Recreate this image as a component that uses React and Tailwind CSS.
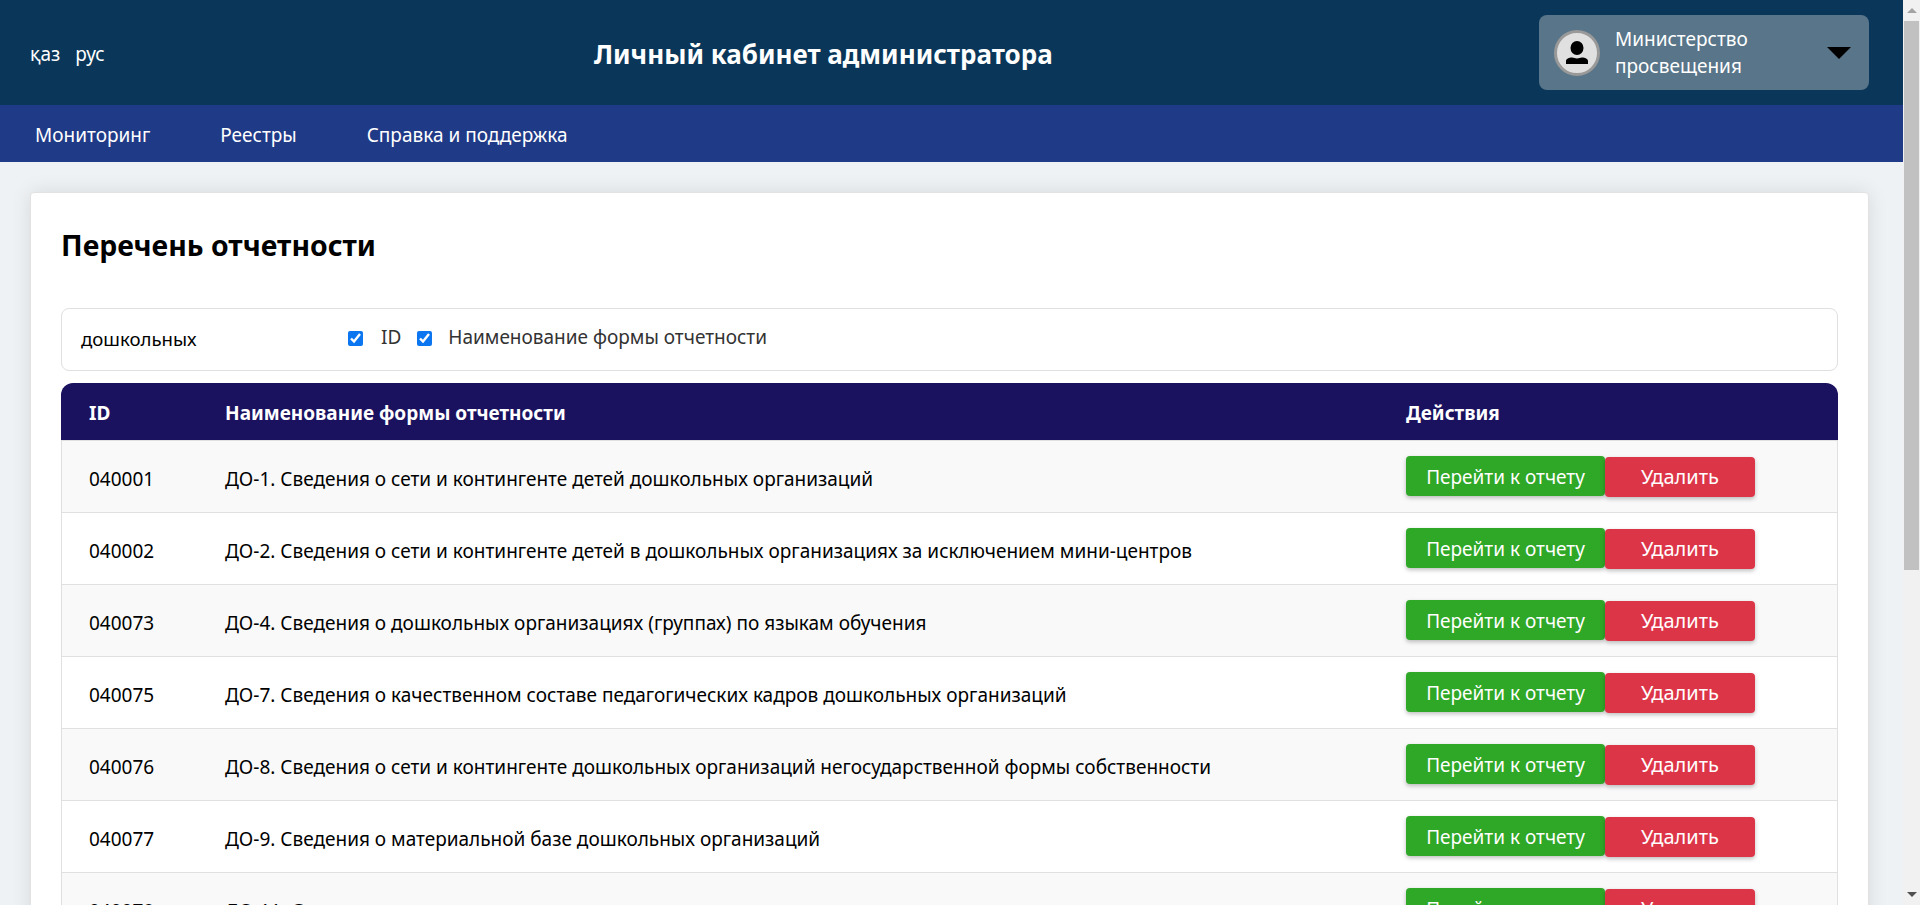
const rows = [
  ['040001', 'ДО-1. Сведения о сети и контингенте детей дошкольных организаций'],
  ['040002', 'ДО-2. Сведения о сети и контингенте детей в дошкольных организациях за исключением мини-центров'],
  ['040073', 'ДО-4. Сведения о дошкольных организациях (группах) по языкам обучения'],
  ['040075', 'ДО-7. Сведения о качественном составе педагогических кадров дошкольных организаций'],
  ['040076', 'ДО-8. Сведения о сети и контингенте дошкольных организаций негосударственной формы собственности'],
  ['040077', 'ДО-9. Сведения о материальной базе дошкольных организаций'],
  ['040078', 'ДО-11. Сведения'],
]

function UserIcon() {
  return (
    <div className="flex h-[46px] w-[46px] shrink-0 items-center justify-center rounded-full border-[3px] border-[#999] bg-[#e0e0e0]">
      <svg width="24" height="24" viewBox="0 0 24 24" fill="#000">
        <ellipse cx="12" cy="7" rx="6.500" ry="7" />
        <path d="M1 23v-3c0-2 3-3.500 6-3.500 2 0 3 1 5 1s3-1 5-1c3 0 6 1.500 6 3.500v3z" />
      </svg>
    </div>
  )
}

function Scrollbar() {
  return (
    <div className="flex h-full w-[17px] shrink-0 flex-col items-center bg-[#f1f1f1]">
      <div className="flex h-[21px] w-full items-center justify-center">
        <div className="h-0 w-0 border-x-[5px] border-b-[5px] border-x-transparent border-b-[#a3a3a3]" />
      </div>
      <div className="h-[549px] w-[15px] bg-[#c1c1c1]" />
      <div className="flex-1" />
      <div className="flex h-[21px] w-full items-center justify-center">
        <div className="h-0 w-0 border-x-[5px] border-t-[5px] border-x-transparent border-t-[#505050]" />
      </div>
    </div>
  )
}

export default function App() {
  return (
    <div className="flex h-screen overflow-hidden font-['Noto_Sans',sans-serif]">
      <div className="min-w-0 flex-1 overflow-hidden bg-[#eff2f5]">
        {/* Header */}
        <header className="flex h-[105px] items-center bg-[#0a3759] pl-[30px] pr-[34px] text-white">
          <div className="flex w-[564px] gap-[15px] pt-1 text-[19px]">
            <span>қаз</span>
            <span>рус</span>
          </div>
          <h1 className="flex-1 pt-[3px] text-[26px] font-bold">Личный кабинет администратора</h1>
          <div className="flex h-[75px] w-[330px] items-center rounded-lg bg-[#587589] pl-[15px] pr-[18px]">
            <UserIcon />
            <div className="ml-[15px] flex-1 text-[19px] leading-[27px]">Министерство просвещения</div>
            <div className="h-0 w-0 border-x-[12px] border-t-[12px] border-x-transparent border-t-black" />
          </div>
        </header>

        <nav className="flex h-[57px] items-center gap-[70px] bg-[#1f3a87] pl-[35px] pt-[3px] text-[19px] text-white">
          <span>Мониторинг</span>
          <span>Реестры</span>
          <span>Справка и поддержка</span>
        </nav>

        <main className="pl-[30px] pr-[34px] pt-[30px]">
          <div className="rounded border border-[#e2e2e2] bg-white px-[30px] pt-[30px] shadow-[0_0_20px_rgba(0,0,0,0.1)]">
            <h2 className="text-[28.4px] font-bold leading-[44px] text-black">Перечень отчетности</h2>

            <div className="mt-[41px] flex h-[63px] items-center rounded-lg border border-[#e0e0e0] pl-[19px] text-[19px]">
              <span className="w-[267px] -translate-y-px text-[18.6px] text-black">дошкольных</span>
              <input type="checkbox" defaultChecked className="h-[15px] w-[15px] -translate-y-px accent-[#0b76ef]" />
              <span className="ml-[18px] -translate-y-0.5 text-[#333]">ID</span>
              <input type="checkbox" defaultChecked className="ml-4 h-[15px] w-[15px] -translate-y-px accent-[#0b76ef]" />
              <span className="ml-4 -translate-y-0.5 text-[#333]">Наименование формы отчетности</span>
            </div>

            <table className="mt-3 w-full border-separate border-spacing-0 text-[19px] text-black">
              <thead>
                <tr className="h-[58px] bg-[#1b125f] text-left text-white">
                  <th className="w-[164px] rounded-tl-xl border-b border-[#e0e0e0] pl-7 pt-[3px] font-bold">ID</th>
                  <th className="border-b border-[#e0e0e0] pt-[3px] font-bold">Наименование формы отчетности</th>
                  <th className="w-[432px] rounded-tr-xl border-b border-[#e0e0e0] pt-[3px] font-bold">Действия</th>
                </tr>
              </thead>
              <tbody>
                {rows.map((row, i) => (
                  <tr key={row[0]} className={i % 2 === 0 ? 'h-[72px] bg-[#f9f9f9]' : 'h-[72px] bg-white'}>
                    <td className="border-b border-l border-[#e0e0e0] pl-[27px] pt-[5px]">{row[0]}</td>
                    <td className="border-b border-[#e0e0e0] pt-[5px]">{row[1]}</td>
                    <td className="border-b border-r border-[#e0e0e0]">
                      <div className="flex items-start">
                        <button className="h-10 w-[199px] rounded bg-[#2fa727] pt-0.5 text-[19px] text-white shadow-[0_2px_4px_rgba(0,0,0,0.25)]">Перейти к отчету</button>
                        <button className="mt-px h-10 w-[150px] rounded bg-[#dd3548] text-[20px] text-white shadow-[0_2px_4px_rgba(0,0,0,0.25)]">Удалить</button>
                      </div>
                    </td>
                  </tr>
                ))}
              </tbody>
            </table>
          </div>
        </main>
      </div>
      <Scrollbar />
    </div>
  )
}
